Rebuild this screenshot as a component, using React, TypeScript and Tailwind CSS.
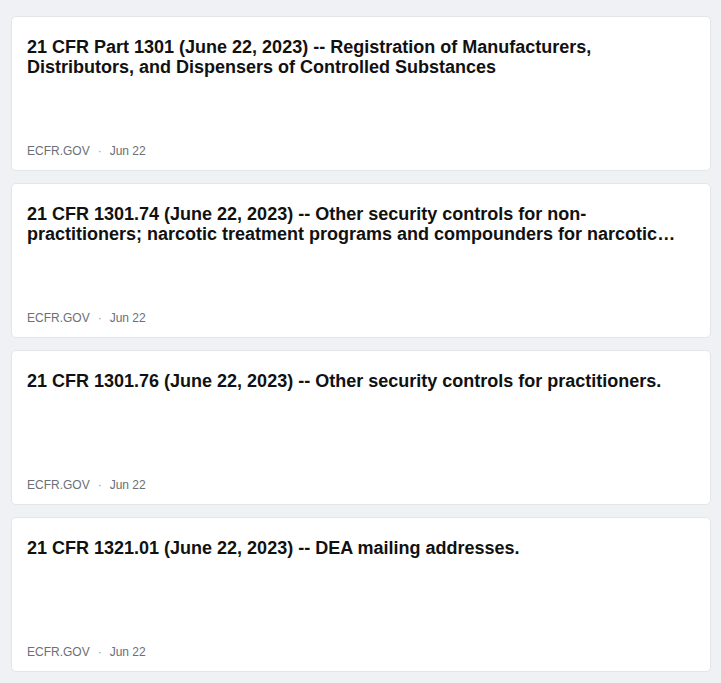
import React from "react";

const items = [
  "21 CFR Part 1301 (June 22, 2023) -- Registration of Manufacturers, Distributors, and Dispensers of Controlled Substances",
  "21 CFR 1301.74 (June 22, 2023) -- Other security controls for non-practitioners; narcotic treatment programs and compounders for narcotic treatment programs.",
  "21 CFR 1301.76 (June 22, 2023) -- Other security controls for practitioners.",
  "21 CFR 1321.01 (June 22, 2023) -- DEA mailing addresses.",
];

export default function App() {
  return (
    <div
      className="min-h-[683px] bg-[#f0f1f4] pl-[11px] pr-[10px] pt-4 pb-[10px] flex flex-col gap-3"
      style={{ fontFamily: '"Liberation Sans", Arial, sans-serif' }}
    >
      {items.map((t, i) => (
        <div
          key={i}
          className="h-[155px] bg-white border border-[#e3e5e8] rounded-[5px] flex flex-col justify-between pt-5 pb-[11px] pl-[15px] pr-5"
        >
          <h2 className="text-[18px] leading-[20px] font-bold text-[#111] line-clamp-2">{t}</h2>
          <div className="flex items-center text-[12px] leading-4 text-[#6b6f76]">
            <span>ECFR.GOV</span>
            <span className="mx-[8px] text-[#9aa0a8]">·</span>
            <span>Jun 22</span>
          </div>
        </div>
      ))}
    </div>
  );
}
